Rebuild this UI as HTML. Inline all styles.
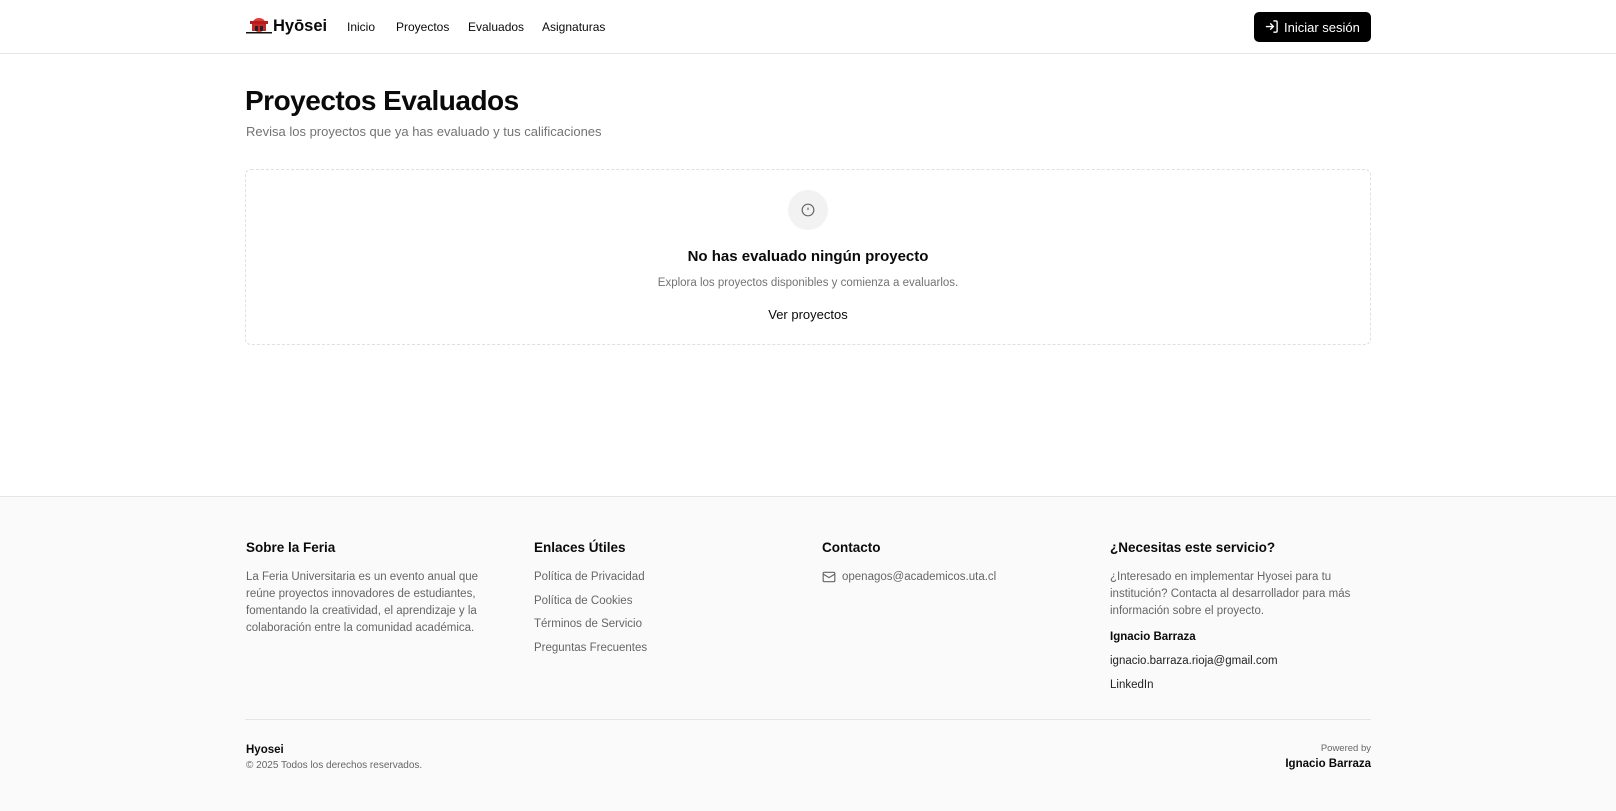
<!DOCTYPE html>
<html><head><meta charset="utf-8"><style>
*{margin:0;padding:0;box-sizing:border-box}
body{width:1616px;height:811px;font-family:"Liberation Sans",sans-serif;background:#fff;color:#0a0a0a;position:relative;overflow:hidden}
.a{position:absolute;white-space:nowrap}
header{position:absolute;left:0;top:0;width:1616px;height:54px;border-bottom:1px solid #e5e5e5}
.nav{font-size:12px;font-weight:500;top:20px}
footer{position:absolute;left:0;top:496px;width:1616px;height:315px;background:#fafafa;border-top:1px solid #e5e5e5}
.h{font-size:13.5px;font-weight:bold;top:43px}
.p{font-size:11.5px;color:#666;line-height:17px}
</style></head><body>
<header>
<svg class="a" style="left:246px;top:17px" width="26" height="18" viewBox="0 0 26 18"><circle cx="13" cy="8" r="7" fill="#e53935"/><rect x="4" y="4" width="18" height="3" fill="#b71c1c"/><rect x="6" y="7" width="14" height="7" fill="#c62828"/><rect x="9" y="9" width="3" height="5" fill="#222"/><rect x="14" y="9" width="3" height="5" fill="#222"/><rect x="0" y="15" width="26" height="1.5" fill="#111"/></svg>
<div class="a" style="left:273px;top:17px;font-size:16.5px;font-weight:bold">Hyōsei</div>
<div class="a nav" style="left:347px">Inicio</div>
<div class="a nav" style="left:396px">Proyectos</div>
<div class="a nav" style="left:468px">Evaluados</div>
<div class="a nav" style="left:542px">Asignaturas</div>
<div class="a" style="left:1254px;top:12px;width:117px;height:30px;background:#000;border-radius:5px;color:#fff;font-size:13px;padding:8px 0 0 30px">Iniciar sesión</div>
<svg class="a" style="left:1264px;top:19px" width="15" height="15" viewBox="0 0 24 24" fill="none" stroke="#fff" stroke-width="2.2"><path d="M15 3h4a2 2 0 0 1 2 2v14a2 2 0 0 1-2 2h-4M10 17l5-5-5-5M15 12H3"/></svg>
</header>
<div class="a" style="left:245px;top:85px;font-size:28px;font-weight:bold;letter-spacing:-0.5px">Proyectos Evaluados</div>
<div class="a" style="left:246px;top:124px;font-size:13px;color:#737373">Revisa los proyectos que ya has evaluado y tus calificaciones</div>
<div class="a" style="left:245px;top:169px;width:1126px;height:176px;border:1px dashed #e0e0e0;border-radius:6px"></div>
<div class="a" style="left:788px;top:190px;width:40px;height:40px;border-radius:50%;background:#f2f2f2"></div>
<svg class="a" style="left:801px;top:203px" width="14" height="14" viewBox="0 0 24 24" fill="none" stroke="#666" stroke-width="2"><circle cx="12" cy="12" r="10"/><path d="M12 8v4M12 16h.01"/></svg>
<div class="a" style="left:0;width:1616px;text-align:center;top:248px;font-size:15px;font-weight:bold">No has evaluado ningún proyecto</div>
<div class="a" style="left:0;width:1616px;text-align:center;top:277px;font-size:11.5px;color:#737373">Explora los proyectos disponibles y comienza a evaluarlos.</div>
<div class="a" style="left:0;width:1616px;text-align:center;top:307px;font-size:13px">Ver proyectos</div>
<footer>
<div class="a h" style="left:246px">Sobre la Feria</div>
<div class="a p" style="left:246px;top:72px">La Feria Universitaria es un evento anual que<br>reúne proyectos innovadores de estudiantes,<br>fomentando la creatividad, el aprendizaje y la<br>colaboración entre la comunidad académica.</div>
<div class="a h" style="left:534px">Enlaces Útiles</div>
<div class="a p" style="left:534px;top:69px;line-height:23.5px">Política de Privacidad<br>Política de Cookies<br>Términos de Servicio<br>Preguntas Frecuentes</div>
<div class="a h" style="left:822px">Contacto</div>
<svg class="a" style="left:822px;top:73px" width="14" height="14" viewBox="0 0 24 24" fill="none" stroke="#666" stroke-width="2"><rect x="2" y="4" width="20" height="16" rx="2"/><path d="M22 7l-10 6L2 7"/></svg>
<div class="a p" style="left:842px;top:72px">openagos@academicos.uta.cl</div>
<div class="a h" style="left:1110px">¿Necesitas este servicio?</div>
<div class="a p" style="left:1110px;top:72px">¿Interesado en implementar Hyosei para tu<br>institución? Contacta al desarrollador para más<br>información sobre el proyecto.</div>
<div class="a" style="left:1110px;top:134px;font-size:11.5px;font-weight:bold">Ignacio Barraza</div>
<div class="a" style="left:1110px;top:158px;font-size:11.5px;color:#222">ignacio.barraza.rioja@gmail.com</div>
<div class="a" style="left:1110px;top:182px;font-size:11.5px;color:#222">LinkedIn</div>
<div class="a" style="left:245px;top:222px;width:1126px;border-top:1px solid #e5e5e5"></div>
<div class="a" style="left:246px;top:247px;font-size:11.5px;font-weight:bold">Hyosei</div>
<div class="a" style="left:246px;top:263px;font-size:10px;color:#666">© 2025 Todos los derechos reservados.</div>
<div class="a" style="right:245px;top:246px;font-size:9.5px;color:#666">Powered by</div>
<div class="a" style="right:245px;top:261px;font-size:11.5px;font-weight:bold">Ignacio Barraza</div>
</footer>
</body></html>
